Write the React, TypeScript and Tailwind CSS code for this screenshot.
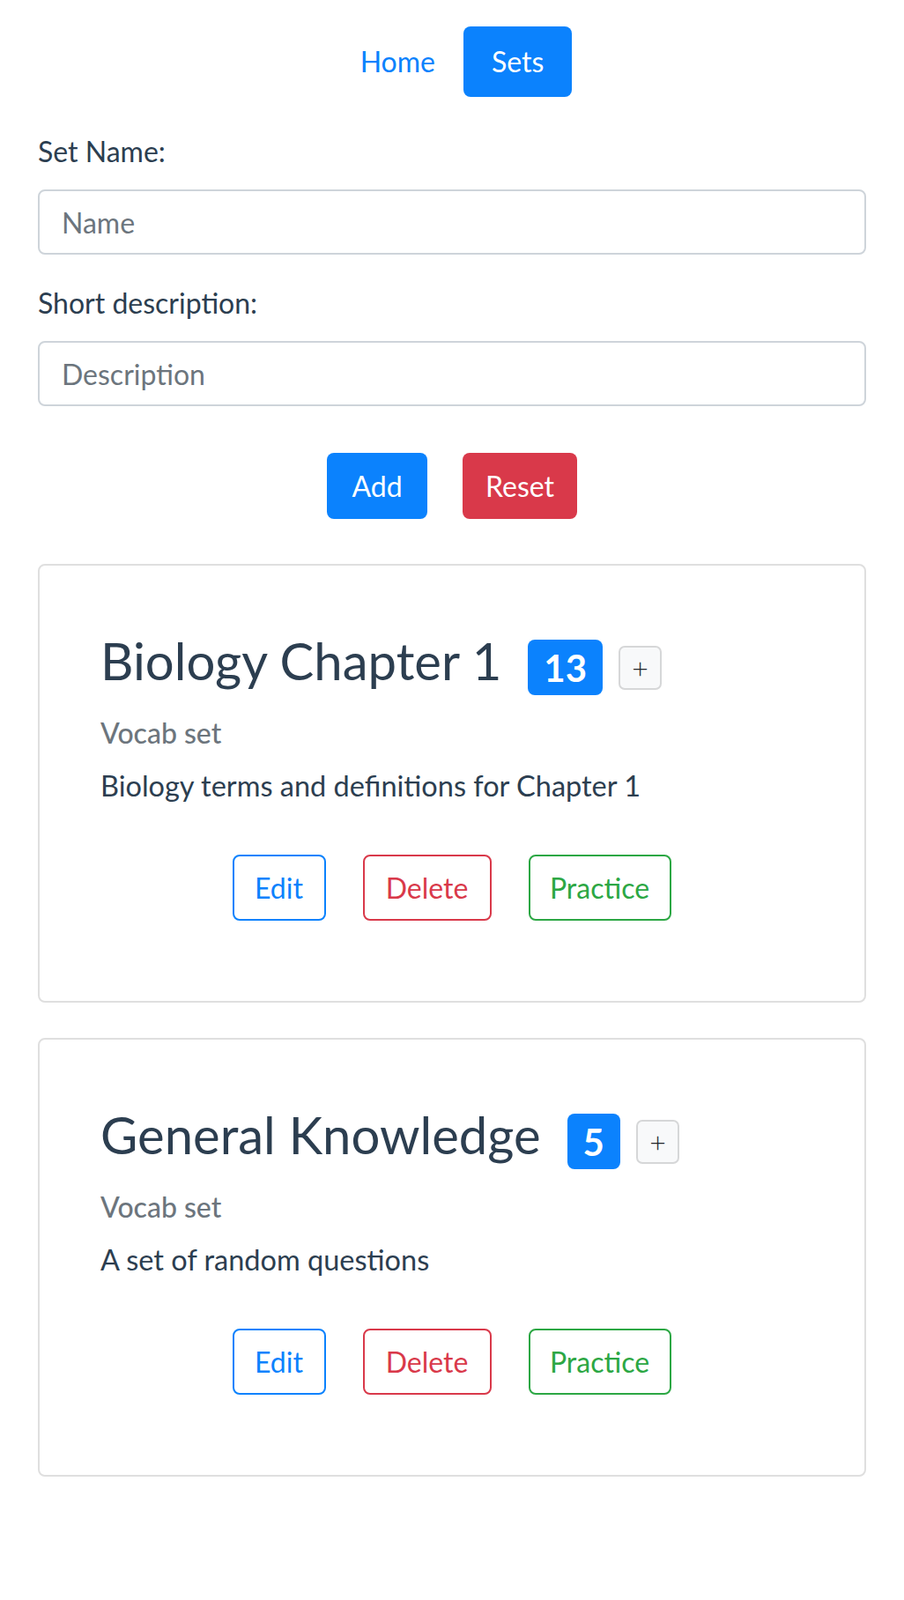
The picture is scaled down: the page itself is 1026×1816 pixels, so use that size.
import React from "react";

type VocabSet = { name: string; count: number; description: string };

const sets: VocabSet[] = [
  { name: "Biology Chapter 1", count: 13, description: "Biology terms and definitions for Chapter 1" },
  { name: "General Knowledge", count: 5, description: "A set of random questions" },
];

function SetCard({ set }: { set: VocabSet }) {
  return (
    <div className="rounded-[8px] border-2 border-[#dfdfdf] pl-[69px] pr-[40px] pt-[74px] pb-[91px]">
      {/* title + count + add */}
      <div className="flex items-start">
        <h3 className="text-[58px] leading-[67px] font-normal">{set.name}</h3>
        <span className="ml-[30px] mt-[10px] flex h-[63px] min-w-[60px] items-center justify-center rounded-[8px] bg-[#0b82fd] px-[18px] text-[42px] font-bold leading-none text-white">
          {set.count}
        </span>
        <button className="ml-[18px] mt-[17px] flex h-[50px] w-[49px] items-center justify-center rounded-[7px] border-2 border-[#d6d7d8] bg-[#f8f9fa] text-[32px] font-light leading-none text-[#212529]">
          +
        </button>
      </div>
      <h6 className="mt-[25px] text-[32px] leading-[36px] font-medium text-[#6c757d]">Vocab set</h6>
      <p className="mt-[18px] text-[32.5px] leading-[48px]">{set.description}</p>
      <div className="mt-[54px] flex justify-center gap-[42px] pr-[30px]">
        <button className="h-[75px] w-[106px] rounded-[8px] border-2 border-[#0b82fd] text-[32px] text-[#0b82fd]">
          Edit
        </button>
        <button className="h-[75px] w-[146px] rounded-[8px] border-2 border-[#d9394a] text-[32px] text-[#d9394a]">
          Delete
        </button>
        <button className="h-[75px] w-[162px] rounded-[8px] border-2 border-[#2ca744] text-[32px] text-[#2ca744]">
          Practice
        </button>
      </div>
    </div>
  );
}

export default function App() {
  return (
    <div className="min-h-[1816px] bg-white font-['Lato','Open_Sans',sans-serif] text-[#2c3e50]">
      <nav className="flex justify-center pt-[30px]">
        <a className="px-[32px] py-[16px] text-[32px] leading-[48px] text-[#0b82fd]">Home</a>
        <a className="rounded-[8px] bg-[#0b82fd] px-[32px] py-[16px] text-[32px] leading-[48px] text-white">Sets</a>
      </nav>

      <div className="px-[43px]">
        <form className="mt-[38px]">
          <label className="mb-[19px] block text-[32px] leading-[48px]">Set Name:</label>
          <input
            placeholder="Name"
            className="block h-[74px] w-full rounded-[8px] border-2 border-[#ced4da] px-[25px] text-[32px] placeholder:text-[#6c757d]"
          />
          <label className="mt-[31px] mb-[19px] block text-[32px] leading-[48px]">Short description:</label>
          <input
            placeholder="Description"
            className="block h-[74px] w-full rounded-[8px] border-2 border-[#ced4da] px-[25px] text-[32px] placeholder:text-[#6c757d]"
          />
          <div className="mt-[53px] flex justify-center gap-[40px]">
            <button type="button" className="h-[75px] w-[114px] rounded-[8px] bg-[#0b82fd] text-[32px] text-white">
              Add
            </button>
            <button type="button" className="h-[75px] w-[130px] rounded-[8px] bg-[#d9394a] text-[32px] text-white">
              Reset
            </button>
          </div>
        </form>

        <div className="mt-[51px] flex flex-col gap-[40px]">
          {sets.map((s) => (
            <SetCard key={s.name} set={s} />
          ))}
        </div>
      </div>
    </div>
  );
}
